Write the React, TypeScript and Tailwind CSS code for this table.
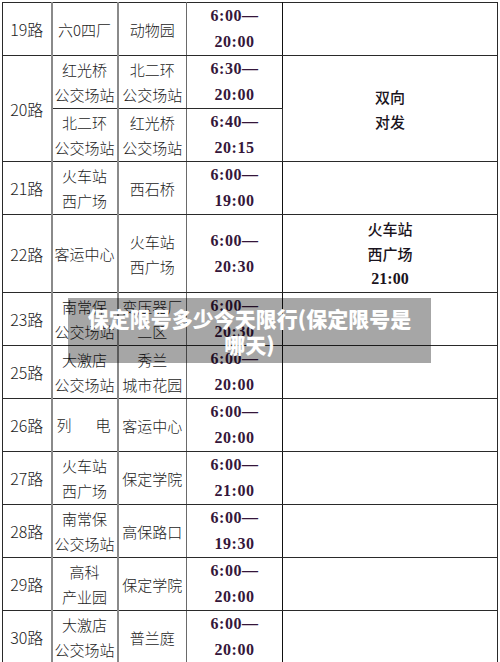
import React from "react";

const cjk = { fontFamily: '"Noto Sans CJK SC", "Noto Sans", sans-serif' };
const timeFont = { fontFamily: '"Liberation Serif", "Noto Sans CJK SC", serif' };

type Row = {
  route?: string;
  routeSpan?: number;
  a: string[];
  aSpread?: boolean;
  b: string[];
  t: [string, string];
  h: number;
  note?: string[] | null;
  noteSpan?: number;
  skipNote?: boolean;
  skipRoute?: boolean;
};

const rows: Row[] = [
  { route: "19路", a: ["六0四厂"], b: ["动物园"], t: ["6:00—", "20:00"], h: 52, note: [] },
  { route: "20路", routeSpan: 2, a: ["红光桥", "公交场站"], b: ["北二环", "公交场站"], t: ["6:30—", "20:00"], h: 53, note: ["双向", "对发"], noteSpan: 2 },
  { skipRoute: true, a: ["北二环", "公交场站"], b: ["红光桥", "公交场站"], t: ["6:40—", "20:15"], h: 53, skipNote: true },
  { route: "21路", a: ["火车站", "西广场"], b: ["西石桥"], t: ["6:00—", "19:00"], h: 52, note: [] },
  { route: "22路", a: ["客运中心"], b: ["火车站", "西广场"], t: ["6:00—", "20:30"], h: 78, note: ["火车站", "西广场", "21:00"] },
  { route: "23路", a: ["南常保", "公交场站"], b: ["变压器厂", "二区"], t: ["6:00—", "20:30"], h: 53, note: [] },
  { route: "25路", a: ["大激店", "公交场站"], b: ["秀兰", "城市花园"], t: ["6:00—", "20:00"], h: 52, note: [] },
  { route: "26路", a: ["列", "电"], aSpread: true, b: ["客运中心"], t: ["6:00—", "20:00"], h: 53, note: [] },
  { route: "27路", a: ["火车站", "西广场"], b: ["保定学院"], t: ["6:00—", "21:00"], h: 52, note: [] },
  { route: "28路", a: ["南常保", "公交场站"], b: ["高保路口"], t: ["6:00—", "19:30"], h: 53, note: [] },
  { route: "29路", a: ["高科", "产业园"], b: ["保定学院"], t: ["6:00—", "20:00"], h: 53, note: [] },
  { route: "30路", a: ["大激店", "公交场站"], b: ["普兰庭"], t: ["6:00—", "20:00"], h: 51, note: [] },
  { route: "", a: [""], b: [""], t: ["", ""], h: 51, note: [] },
];

function Lines({ items }: { items: string[] }) {
  return (
    <div className="flex flex-col items-center leading-[25px]">
      {items.map((s, i) => (
        <span key={i} className="whitespace-nowrap">{s}</span>
      ))}
    </div>
  );
}

export default function App() {
  return (
    <div className="relative w-[500px] h-[662px] overflow-hidden bg-white">
      <div className="pt-[2px] pl-[2px]">
        <table
          className="table-fixed border-collapse text-[15px] text-[#1c1c1c] font-light"
          style={cjk}
        >
          <colgroup>
            <col className="w-[49px]" />
            <col className="w-[66px]" />
            <col className="w-[69px]" />
            <col className="w-[96px]" />
            <col className="w-[215px]" />
          </colgroup>
          <tbody>
            {rows.map((r, i) => (
              <tr key={i} style={{ height: r.h }}>
                {!r.skipRoute && (
                  <td
                    rowSpan={r.routeSpan ?? 1}
                    className="border-y border-l border-y-[#2a2a2a] border-l-[#2a2a2a] border-r-2 border-r-[#8a8a8a] p-0 text-center align-middle text-[16px]"
                  >
                    {r.route}
                  </td>
                )}
                <td className="border-y border-y-[#2a2a2a] border-r-2 border-r-[#8a8a8a] p-0 text-center align-middle">
                  {r.aSpread ? (
                    <div className="flex justify-between pl-[4px] pr-[6px]">
                      <span>{r.a[0]}</span>
                      <span>{r.a[1]}</span>
                    </div>
                  ) : (
                    <Lines items={r.a} />
                  )}
                </td>
                <td className="border-y border-y-[#2a2a2a] border-r border-r-[#6a6a6a] p-0 text-center align-middle">
                  <Lines items={r.b} />
                </td>
                <td
                  className="border-y border-y-[#2a2a2a] border-r border-r-[#111] p-0 text-center align-middle font-bold text-[16px] text-[#35163a] tracking-[0.5px]"
                  style={timeFont}
                >
                  <div className="flex flex-col items-center leading-[26px]">
                    <span>{r.t[0]}</span>
                    <span>{r.t[1]}</span>
                  </div>
                </td>
                {!r.skipNote && (
                  <td
                    rowSpan={r.noteSpan ?? 1}
                    className="border border-[#2a2a2a] p-0 text-center align-middle font-medium text-[15px] text-[#1a1420]"
                  >
                    {r.note && r.note.length > 0 && (
                      <div className="flex flex-col items-center leading-[25px]">
                        {r.note.map((s, k) => (
                          <span
                            key={k}
                            style={/\d/.test(s) ? { ...timeFont, fontWeight: 700, fontSize: 16 } : undefined}
                          >
                            {s}
                          </span>
                        ))}
                      </div>
                    )}
                  </td>
                )}
              </tr>
            ))}
          </tbody>
        </table>
      </div>
      <div className="absolute left-[68px] top-[298px] w-[363px] h-[65px] bg-black/35 flex items-center justify-center">
        <div
          className="text-center text-white font-black text-[21px] leading-[26px]"
          style={cjk}
        >
          保定限号多少今天限行(保定限号是
          <br />
          哪天)
        </div>
      </div>
    </div>
  );
}
